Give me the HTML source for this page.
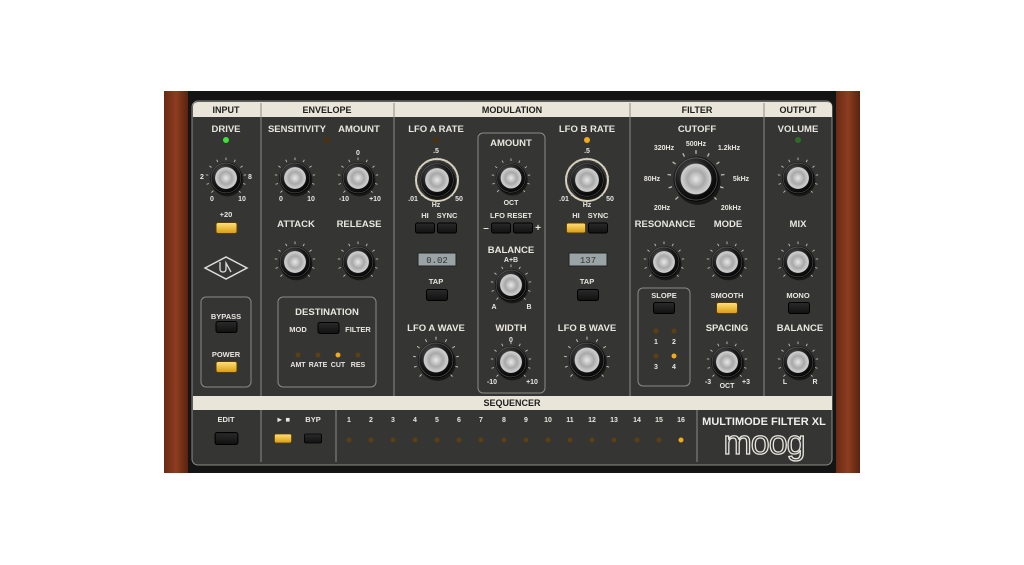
<!DOCTYPE html>
<html><head><meta charset="utf-8"><style>
html,body{margin:0;padding:0;background:#fff;width:1024px;height:565px;overflow:hidden}
svg{display:block}
text{font-family:"Liberation Sans",sans-serif;font-weight:bold;fill:#e8e6df;text-anchor:middle}
.h{fill:#1e1e1e;font-size:9px}
.l{font-size:9.5px}
.s{font-size:7px;font-weight:normal;fill:#cfcfcf}
.m{font-size:7.5px}
</style></head><body>
<svg width="1024" height="565" viewBox="0 0 1024 565">
<defs>
<radialGradient id="cap" cx="50%" cy="50%" r="55%"><stop offset="0" stop-color="#e8e8e8"/><stop offset=".5" stop-color="#a8a8a8"/><stop offset=".85" stop-color="#d0d0d0"/><stop offset="1" stop-color="#555"/></radialGradient>
<radialGradient id="skirt" cx="40%" cy="35%" r="65%"><stop offset="0" stop-color="#5a5a5a"/><stop offset=".6" stop-color="#1a1a1a"/><stop offset="1" stop-color="#050505"/></radialGradient>
<linearGradient id="wood" x1="0" x2="1"><stop offset="0" stop-color="#6a2a14"/><stop offset=".5" stop-color="#8e3d1e"/><stop offset="1" stop-color="#5a2210"/></linearGradient>
<linearGradient id="btn" x1="0" y1="0" x2="0" y2="1"><stop offset="0" stop-color="#2a2a2a"/><stop offset="1" stop-color="#111"/></linearGradient>
<linearGradient id="ybtn" x1="0" y1="0" x2="0" y2="1"><stop offset="0" stop-color="#ffe27a"/><stop offset="1" stop-color="#d99a10"/></linearGradient>
<symbol id="k" viewBox="-24 -24 48 48">
<path d="M-13.8 13.8L-15.9 15.9M-18.6 6L-21.2 6.9M-19.3 -3.1L-22 -3.5M-15.8 -11.5L-18.1 -13.2M-8.9 -17.4L-10.2 -19.9M0 -19.5L0 -22.4M8.9 -17.4L10.2 -19.9M15.8 -11.5L18.1 -13.2M19.3 -3.1L22 -3.5M18.6 6L21.2 6.9M13.8 13.8L15.9 15.9" stroke="#bdbdb8" stroke-width="1"/>
<circle cx="1.5" cy="2.5" r="17.5" fill="#000" opacity=".55"/><circle r="17.5" fill="url(#skirt)"/><circle r="16.3" fill="none" stroke="#777" stroke-width=".6" opacity=".7"/><circle r="12" fill="url(#cap)"/></symbol>
<symbol id="b" viewBox="0 0 22 12"><rect x=".5" y=".5" width="21" height="11" rx="2" fill="url(#btn)" stroke="#000"/></symbol>
<symbol id="y" viewBox="0 0 22 12"><rect x=".5" y=".5" width="21" height="11" rx="2" fill="url(#ybtn)" stroke="#5a3b00"/></symbol>
</defs>
<rect x="164" y="91" width="696" height="382" fill="#141414"/>
<rect x="164" y="91" width="24" height="382" fill="url(#wood)"/>
<rect x="836" y="91" width="24" height="382" fill="url(#wood)"/>
<rect x="192" y="101" width="640" height="364" rx="6" fill="#353533" stroke="#8a8a86" stroke-width="1"/>
<path d="M193 117 V107 q0-5 5-5 H827 q5 0 5 5 V117 Z" fill="#e9e5d8"/>
<rect x="193" y="396" width="639" height="14" fill="#e9e5d8"/>
<g stroke="#8a8a86" stroke-width="1">
<line x1="261" y1="103" x2="261" y2="396"/><line x1="394" y1="103" x2="394" y2="396"/>
<line x1="630" y1="103" x2="630" y2="396"/><line x1="764" y1="103" x2="764" y2="396"/>
<line x1="261" y1="410" x2="261" y2="462"/><line x1="336" y1="410" x2="336" y2="462"/><line x1="697" y1="410" x2="697" y2="462"/>
</g>
<text class="h" x="226" y="113">INPUT</text><text class="h" x="327" y="113">ENVELOPE</text>
<text class="h" x="512" y="113">MODULATION</text><text class="h" x="697" y="113">FILTER</text>
<text class="h" x="798" y="113">OUTPUT</text><text class="h" x="512" y="406">SEQUENCER</text>
<g fill="none" stroke="#8a8a86" stroke-width="1">
<rect x="201" y="297" width="50" height="90" rx="5"/>
<rect x="278" y="297" width="98" height="90" rx="5"/>
<rect x="478" y="133" width="67" height="260" rx="5"/>
<rect x="638" y="288" width="52" height="98" rx="5"/>
</g>
<g class="l">
<text x="226" y="132">DRIVE</text><text x="297" y="132">SENSITIVITY</text><text x="359" y="132">AMOUNT</text>
<text x="296" y="227">ATTACK</text><text x="359" y="227">RELEASE</text>
<text x="436" y="132">LFO A RATE</text><text x="511" y="146">AMOUNT</text><text x="587" y="132">LFO B RATE</text>
<text x="511" y="253">BALANCE</text><text x="511" y="331">WIDTH</text>
<text x="436" y="331">LFO A WAVE</text><text x="587" y="331">LFO B WAVE</text>
<text x="697" y="132">CUTOFF</text><text x="665" y="227">RESONANCE</text><text x="728" y="227">MODE</text>
<text x="727" y="331">SPACING</text>
<text x="798" y="132">VOLUME</text><text x="798" y="227">MIX</text><text x="800" y="331">BALANCE</text>
<text x="327" y="315">DESTINATION</text>
</g>
<g class="m">
<text x="226" y="217">+20</text><text x="226" y="319">BYPASS</text><text x="226" y="357">POWER</text>
<text x="298" y="332">MOD</text><text x="358" y="332">FILTER</text>
<text x="425" y="218">HI</text><text x="447" y="218">SYNC</text><text x="576" y="218">HI</text><text x="598" y="218">SYNC</text>
<text x="511" y="218">LFO RESET</text><text x="436" y="284">TAP</text><text x="587" y="284">TAP</text>
<text x="664" y="298">SLOPE</text><text x="727" y="298">SMOOTH</text><text x="798" y="298">MONO</text>
<text x="226" y="422">EDIT</text><text x="283" y="422">► ■</text><text x="313" y="422">BYP</text>
<text x="486" y="231" style="font-size:10px">–</text><text x="538" y="231" style="font-size:10px">+</text>
</g>
<g class="s">
<text x="298" y="367">AMT</text><text x="318" y="367">RATE</text><text x="338" y="367">CUT</text><text x="358" y="367">RES</text>
<text x="511" y="262">A+B</text><text x="494" y="309">A</text><text x="529" y="309">B</text>
<text x="511" y="342">0</text><text x="492" y="384">-10</text><text x="532" y="384">+10</text>
<text x="436" y="207">Hz</text><text x="587" y="207">Hz</text><text x="511" y="205">OCT</text>
<text x="696" y="146">500Hz</text><text x="664" y="150">320Hz</text><text x="729" y="150">1.2kHz</text>
<text x="652" y="181">80Hz</text><text x="741" y="181">5kHz</text><text x="662" y="210">20Hz</text><text x="731" y="210">20kHz</text>
<text x="727" y="388">OCT</text><text x="708" y="384">-3</text><text x="746" y="384">+3</text>
<text x="785" y="384">L</text><text x="815" y="384">R</text>
<text x="212" y="201">0</text><text x="242" y="201">10</text><text x="202" y="179">2</text><text x="250" y="179">8</text>
<text x="281" y="201">0</text><text x="311" y="201">10</text><text x="344" y="201">-10</text><text x="375" y="201">+10</text><text x="358" y="155">0</text>
<text x="436" y="153">.5</text><text x="587" y="153">.5</text><text x="413" y="201">.01</text><text x="459" y="201">50</text><text x="564" y="201">.01</text><text x="610" y="201">50</text>
<text x="656" y="344">1</text><text x="674" y="344">2</text><text x="656" y="369">3</text><text x="674" y="369">4</text>
</g>
<circle cx="226" cy="140" r="3" fill="#3fe03a"/><circle cx="798" cy="140" r="3" fill="#2f6a2a"/>
<circle cx="327" cy="140" r="3" fill="#4a3210"/><circle cx="436" cy="140" r="3" fill="#4a3210"/><circle cx="587" cy="140" r="3" fill="#f2a91c"/>
<g fill="#5a4012"><circle cx="298" cy="355" r="2.5"/><circle cx="318" cy="355" r="2.5"/><circle cx="358" cy="355" r="2.5"/><circle cx="656" cy="331" r="2.5"/><circle cx="674" cy="331" r="2.5"/><circle cx="656" cy="356" r="2.5"/></g>
<circle cx="338" cy="355" r="2.5" fill="#f2a91c"/><circle cx="674" cy="356" r="2.5" fill="#f2a91c"/>
<circle cx="437" cy="180" r="21" fill="none" stroke="#d8d2bf" stroke-width="2"/>
<circle cx="587" cy="180" r="21" fill="none" stroke="#d8d2bf" stroke-width="2"/>
<use href="#k" x="204" y="156" width="44" height="44"/>
<use href="#k" x="273" y="156" width="44" height="44"/>
<use href="#k" x="336" y="156" width="44" height="44"/>
<use href="#k" x="273" y="240" width="44" height="44"/>
<use href="#k" x="336" y="240" width="44" height="44"/>
<use href="#k" x="413" y="156" width="48" height="48"/>
<use href="#k" x="563" y="156" width="48" height="48"/>
<use href="#k" x="490" y="157" width="42" height="42"/>
<use href="#k" x="489" y="263" width="44" height="44"/>
<use href="#k" x="489" y="340" width="44" height="44"/>
<use href="#k" x="411" y="335" width="50" height="50"/>
<use href="#k" x="562" y="335" width="50" height="50"/>
<use href="#k" x="665" y="148" width="62" height="62"/>
<use href="#k" x="642" y="240" width="44" height="44"/>
<use href="#k" x="705" y="240" width="44" height="44"/>
<use href="#k" x="705" y="340" width="44" height="44"/>
<use href="#k" x="776" y="156" width="44" height="44"/>
<use href="#k" x="776" y="240" width="44" height="44"/>
<use href="#k" x="776" y="340" width="44" height="44"/>
<use href="#y" x="214" y="222" width="25" height="12"/>
<use href="#b" x="214" y="321" width="25" height="12"/>
<use href="#y" x="214" y="361" width="25" height="12"/>
<use href="#b" x="316" y="322" width="25" height="12"/>
<use href="#b" x="415" y="222" width="20" height="12"/><use href="#b" x="437" y="222" width="20" height="12"/>
<use href="#y" x="566" y="222" width="20" height="12"/><use href="#b" x="588" y="222" width="20" height="12"/>
<use href="#b" x="491" y="222" width="20" height="12"/><use href="#b" x="513" y="222" width="20" height="12"/>
<use href="#b" x="424" y="289" width="26" height="12"/><use href="#b" x="575" y="289" width="26" height="12"/>
<use href="#b" x="651" y="302" width="26" height="12"/><use href="#y" x="714" y="302" width="26" height="12"/>
<use href="#b" x="786" y="302" width="26" height="12"/>
<use href="#b" x="213" y="432" width="27" height="13"/><use href="#y" x="274" y="432" width="18" height="13"/><use href="#b" x="304" y="432" width="18" height="13"/>
<rect x="418" y="253" width="38" height="13" fill="#9aa3a5" stroke="#222"/><text x="437" y="263" style="font-family:'Liberation Mono',monospace;font-size:9px;fill:#333;font-weight:normal">0.02</text>
<rect x="569" y="253" width="38" height="13" fill="#9aa3a5" stroke="#222"/><text x="588" y="263" style="font-family:'Liberation Mono',monospace;font-size:9px;fill:#333;font-weight:normal">137</text>
<path d="M205 268 L226 257 L247 268 L226 279 Z" fill="none" stroke="#ddd" stroke-width="1.5"/>
<path d="M220 262 v7 q0 3 3 3 q3 0 3-3 v-6 l5 9" fill="none" stroke="#ddd" stroke-width="1.3"/>
<g class="s">
<text x="349" y="422">1</text><text x="371" y="422">2</text><text x="393" y="422">3</text><text x="415" y="422">4</text><text x="437" y="422">5</text><text x="459" y="422">6</text><text x="481" y="422">7</text><text x="504" y="422">8</text><text x="526" y="422">9</text><text x="548" y="422">10</text><text x="570" y="422">11</text><text x="592" y="422">12</text><text x="614" y="422">13</text><text x="637" y="422">14</text><text x="659" y="422">15</text><text x="681" y="422">16</text>
</g>
<g fill="#5a4012"><circle cx="349" cy="440" r="2.5"/><circle cx="371" cy="440" r="2.5"/><circle cx="393" cy="440" r="2.5"/><circle cx="415" cy="440" r="2.5"/><circle cx="437" cy="440" r="2.5"/><circle cx="459" cy="440" r="2.5"/><circle cx="481" cy="440" r="2.5"/><circle cx="504" cy="440" r="2.5"/><circle cx="526" cy="440" r="2.5"/><circle cx="548" cy="440" r="2.5"/><circle cx="570" cy="440" r="2.5"/><circle cx="592" cy="440" r="2.5"/><circle cx="614" cy="440" r="2.5"/><circle cx="637" cy="440" r="2.5"/><circle cx="659" cy="440" r="2.5"/></g>
<circle cx="681" cy="440" r="2.5" fill="#f2a91c"/>
<text x="764" y="425" style="font-size:11px;fill:#eee">MULTIMODE FILTER XL</text>
<text x="764" y="454" style="font-size:34px;font-weight:normal;fill:none;stroke:#e8e6df;stroke-width:1.3;letter-spacing:-1px">moog</text>
</svg>
</body></html>
